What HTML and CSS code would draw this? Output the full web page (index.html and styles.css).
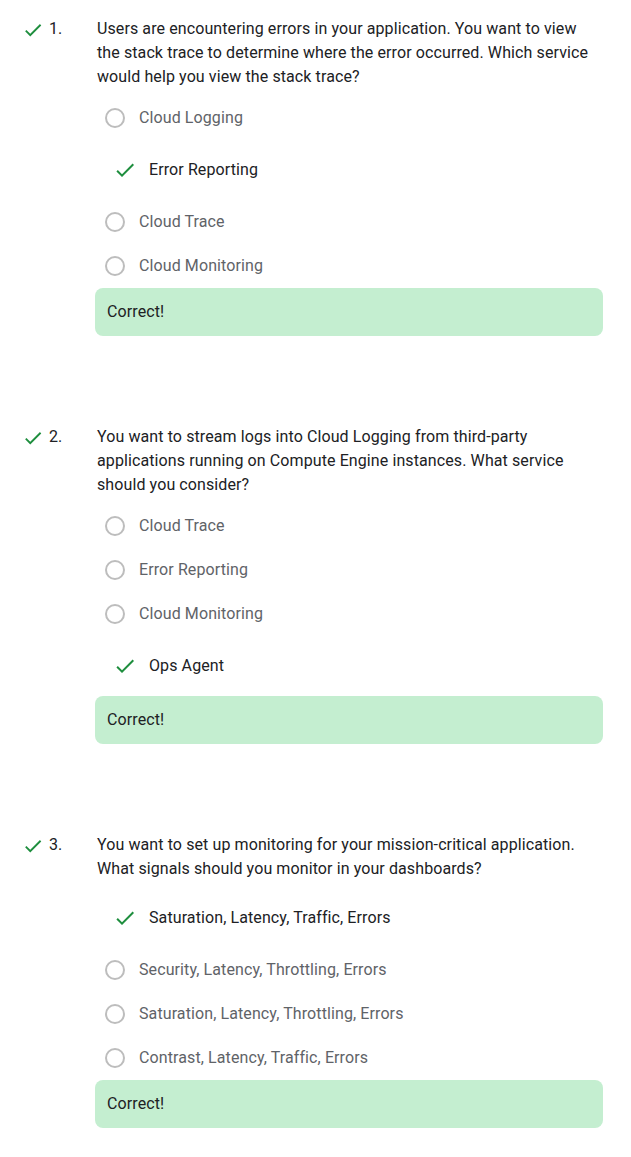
FILE: index.html
```html
<!DOCTYPE html>
<html lang="en">
<head>
<meta charset="utf-8">
<title>Quiz results</title>
<link rel="stylesheet" href="styles.css">
</head>
<body>
<main class="page">
  <section class="question">
    <div class="q-head">
      <svg class="q-check" viewBox="0 0 24 24"><path d="M9 16.17L4.83 12l-1.42 1.41L9 19 21 7l-1.41-1.41z"/></svg>
      <span class="q-num">1.</span>
    </div>
    <div class="q-body">
      <p class="q-text">Users are encountering errors in your application. You want to view the stack trace to determine where the error occurred. Which service would help you view the stack trace?</p>
      <ul class="options">
        <li class="opt"><span class="radio"></span><span class="opt-label">Cloud Logging</span></li>
        <li class="opt opt-correct"><svg class="opt-check" viewBox="0 0 24 24"><path d="M9 16.17L4.83 12l-1.42 1.41L9 19 21 7l-1.41-1.41z"/></svg><span class="opt-label">Error Reporting</span></li>
        <li class="opt"><span class="radio"></span><span class="opt-label">Cloud Trace</span></li>
        <li class="opt"><span class="radio"></span><span class="opt-label">Cloud Monitoring</span></li>
      </ul>
      <div class="feedback">Correct!</div>
    </div>
  </section>

  <section class="question">
    <div class="q-head">
      <svg class="q-check" viewBox="0 0 24 24"><path d="M9 16.17L4.83 12l-1.42 1.41L9 19 21 7l-1.41-1.41z"/></svg>
      <span class="q-num">2.</span>
    </div>
    <div class="q-body">
      <p class="q-text">You want to stream logs into Cloud Logging from third-party applications running on Compute Engine instances. What service should you consider?</p>
      <ul class="options">
        <li class="opt"><span class="radio"></span><span class="opt-label">Cloud Trace</span></li>
        <li class="opt"><span class="radio"></span><span class="opt-label">Error Reporting</span></li>
        <li class="opt"><span class="radio"></span><span class="opt-label">Cloud Monitoring</span></li>
        <li class="opt opt-correct"><svg class="opt-check" viewBox="0 0 24 24"><path d="M9 16.17L4.83 12l-1.42 1.41L9 19 21 7l-1.41-1.41z"/></svg><span class="opt-label">Ops Agent</span></li>
      </ul>
      <div class="feedback">Correct!</div>
    </div>
  </section>

  <section class="question">
    <div class="q-head">
      <svg class="q-check" viewBox="0 0 24 24"><path d="M9 16.17L4.83 12l-1.42 1.41L9 19 21 7l-1.41-1.41z"/></svg>
      <span class="q-num">3.</span>
    </div>
    <div class="q-body">
      <p class="q-text">You want to set up monitoring for your mission-critical application. What signals should you monitor in your dashboards?</p>
      <ul class="options">
        <li class="opt opt-correct"><svg class="opt-check" viewBox="0 0 24 24"><path d="M9 16.17L4.83 12l-1.42 1.41L9 19 21 7l-1.41-1.41z"/></svg><span class="opt-label">Saturation, Latency, Traffic, Errors</span></li>
        <li class="opt"><span class="radio"></span><span class="opt-label">Security, Latency, Throttling, Errors</span></li>
        <li class="opt"><span class="radio"></span><span class="opt-label">Saturation, Latency, Throttling, Errors</span></li>
        <li class="opt"><span class="radio"></span><span class="opt-label">Contrast, Latency, Traffic, Errors</span></li>
      </ul>
      <div class="feedback">Correct!</div>
    </div>
  </section>
</main>
</body>
</html>
```

FILE: styles.css
```css
* { box-sizing: border-box; }

html, body {
  margin: 0;
  padding: 0;
  background: #ffffff;
}

body {
  font-family: Roboto, "Liberation Sans", Arial, sans-serif;
  font-size: 16px;
  line-height: 24px;
  letter-spacing: 0.1px;
  color: #202124;
}

.page {
  padding: 17px 28px 0 22px;
}

.question {
  display: grid;
  grid-template-columns: 73px 1fr;
  margin-bottom: 89px;
}

.question:last-child {
  margin-bottom: 0;
}

.q-head {
  display: flex;
  align-items: flex-start;
  height: 24px;
}

.q-check {
  width: 22px;
  height: 22px;
  margin-top: 2px;
  fill: #1e8e3e;
  flex: none;
}

.q-num {
  margin-left: 5px;
  color: #202124;
}

.q-text {
  margin: 0;
  padding-left: 2px;
}

.options {
  list-style: none;
  margin: 7px 0 0;
  padding: 0;
}

.opt {
  display: flex;
  align-items: center;
  height: 44px;
  padding-left: 10px;
  gap: 14px;
  color: #5f6368;
}

.opt-correct {
  height: 60px;
  padding-left: 18px;
  gap: 12px;
  color: #202124;
}

.radio {
  width: 20px;
  height: 20px;
  border: 2px solid #bdbdbd;
  border-radius: 50%;
  flex: none;
}

.opt-check {
  width: 24px;
  height: 24px;
  fill: #1e8e3e;
  flex: none;
}

.feedback {
  display: flex;
  align-items: center;
  height: 48px;
  padding: 0 12px;
  background: #c4eed0;
  border-radius: 8px;
  color: #202124;
}
```
